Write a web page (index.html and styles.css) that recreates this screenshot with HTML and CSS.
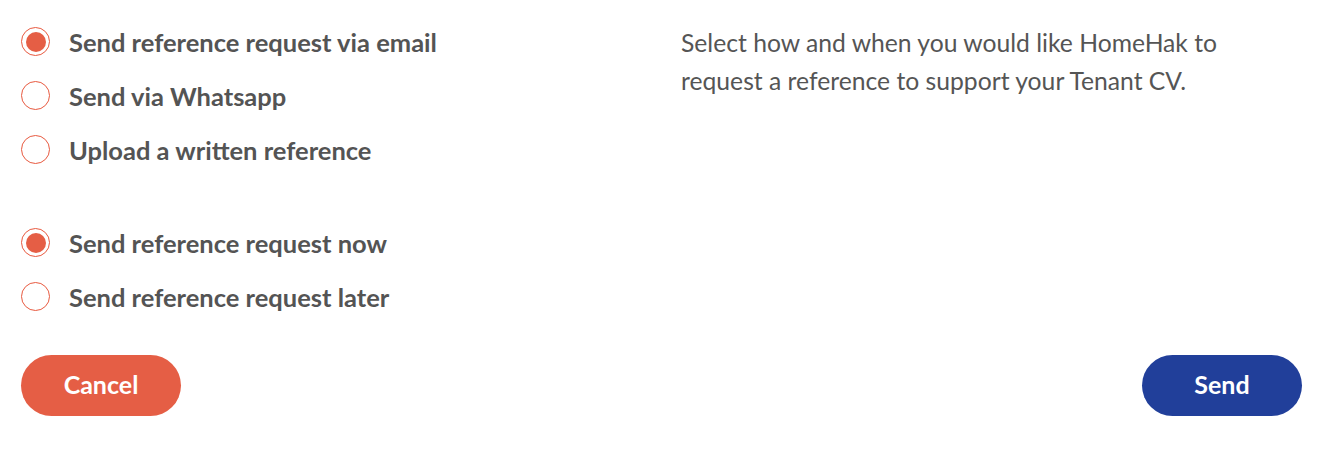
FILE: index.html
```html
<!DOCTYPE html>
<html>
<head>
<meta charset="utf-8">
<link rel="stylesheet" href="styles.css">
</head>
<body>
<div class="page">
  <div class="columns">
    <div class="options">
      <div class="group">
        <label class="option"><span class="radio checked"></span><span class="label">Send reference request via email</span></label>
        <label class="option"><span class="radio"></span><span class="label">Send via Whatsapp</span></label>
        <label class="option"><span class="radio"></span><span class="label">Upload a written reference</span></label>
      </div>
      <div class="group">
        <label class="option"><span class="radio checked"></span><span class="label">Send reference request now</span></label>
        <label class="option"><span class="radio"></span><span class="label">Send reference request later</span></label>
      </div>
    </div>
    <p class="info">Select how and when you would like HomeHak to request a reference to support your Tenant CV.</p>
  </div>
  <div class="actions">
    <button class="btn btn-cancel">Cancel</button>
    <button class="btn btn-send">Send</button>
  </div>
</div>
</body>
</html>
```
FILE: styles.css
```css
* { box-sizing: border-box; }
html, body { margin: 0; background: #fff; }
body { font-family: "Lato", "Open Sans", sans-serif; color: #545454; }
.page { padding: 27px 42px 0 21px; }
.columns { display: grid; grid-template-columns: 660px 1fr; }
.options { display: flex; flex-direction: column; gap: 64px; }
.group { display: flex; flex-direction: column; gap: 25px; }
.option { display: flex; align-items: center; gap: 19px; height: 29px; }
.radio { width: 29px; height: 29px; border: 1.2px solid #e8593f; border-radius: 50%; display: flex; align-items: center; justify-content: center; flex: none; }
.radio.checked::after { content: ""; width: 20px; height: 20px; border-radius: 50%; background: #e55e45; }
.label { font-size: 25.5px; font-weight: 700; color: #545454; }
.info { margin: 0; font-size: 24.7px; line-height: 38px; font-weight: 400; color: #555; max-width: 590px; margin-top: -3px; }
.actions { display: flex; justify-content: space-between; margin-top: 44px; }
.btn { width: 160px; height: 61px; border: none; border-radius: 31px; color: #fff; font-family: "Lato", sans-serif; font-size: 25px; font-weight: 700; padding: 0 0 3px; }
.btn-cancel { background: #e55e45; }
.btn-send { background: #213f9a; }
```
